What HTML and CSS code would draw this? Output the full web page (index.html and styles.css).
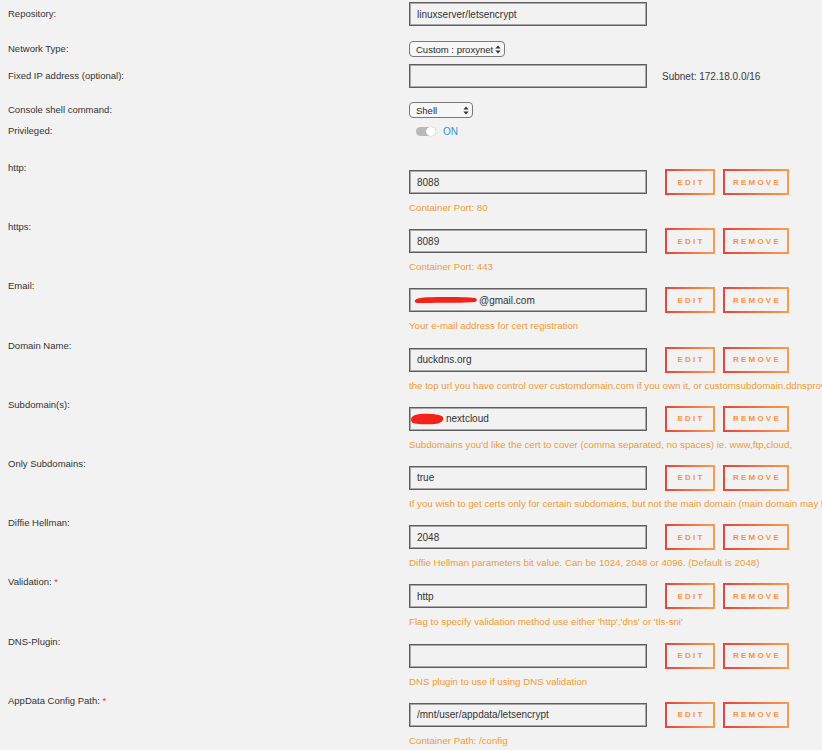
FILE: index.html
```html
<!DOCTYPE html>
<html lang="en">

<head>
    <meta charset="UTF-8">
    <meta name="viewport" content="width=device-width, initial-scale=1.0">
    <title>Update Container</title>
    <link rel="stylesheet" href="styles.css">
</head>

<body>
    <div class="settings">
        <div class="top-row row-repo">
            <label class="row-label">Repository:</label>
            <input class="text-input" type="text" value="linuxserver/letsencrypt">
        </div>
        <div class="top-row row-network">
            <label class="row-label">Network Type:</label>
            <div class="select select-network">
                <span>Custom : proxynet</span>
                <svg width="6" height="9" viewBox="0 0 6 9"><path d="M3 0.5 L5.6 3.6 H0.4 Z M3 8.5 L5.6 5.4 H0.4 Z" fill="#333"/></svg>
            </div>
        </div>
        <div class="top-row row-ip">
            <label class="row-label">Fixed IP address (optional):</label>
            <input class="text-input" type="text" value="">
            <span class="subnet">Subnet: 172.18.0.0/16</span>
        </div>
        <div class="top-row row-shell">
            <label class="row-label">Console shell command:</label>
            <div class="select select-shell">
                <span>Shell</span>
                <svg width="6" height="9" viewBox="0 0 6 9"><path d="M3 0.5 L5.6 3.6 H0.4 Z M3 8.5 L5.6 5.4 H0.4 Z" fill="#333"/></svg>
            </div>
        </div>
        <div class="top-row row-priv">
            <label class="row-label">Privileged:</label>
            <div class="switch-wrap">
                <span class="switch"><span class="knob"></span></span>
                <span class="switch-text">ON</span>
            </div>
        </div>

        <div class="config-list">
            <div class="row">
                <label class="row-label">http:</label>
                <div class="row-body">
                    <div class="row-line">
                        <input class="text-input" type="text" value="8088">
                        <button class="btn btn-edit">Edit</button>
                        <button class="btn btn-remove">Remove</button>
                    </div>
                    <div class="desc">Container Port: 80</div>
                </div>
            </div>
            <div class="row">
                <label class="row-label">https:</label>
                <div class="row-body">
                    <div class="row-line">
                        <input class="text-input" type="text" value="8089">
                        <button class="btn btn-edit">Edit</button>
                        <button class="btn btn-remove">Remove</button>
                    </div>
                    <div class="desc">Container Port: 443</div>
                </div>
            </div>
            <div class="row">
                <label class="row-label">Email:</label>
                <div class="row-body">
                    <div class="row-line">
                        <div class="field-wrap">
                            <input class="text-input redact-email" type="text" value="@gmail.com">
                            <svg class="scribble scribble-email" width="66" height="10" viewBox="0 0 66 10"><path d="M2 5.2 C4 2.6 14 2 30 2 C44 2 56 2.2 62 3 C64.5 3.6 64.5 6.2 62 7 C55 7.8 44 7.8 32 7.7 C20 7.6 9 8.2 4 7.9 C2 7.7 1.4 6.4 2 5.2 Z" fill="#f4221a"/></svg>
                        </div>
                        <button class="btn btn-edit">Edit</button>
                        <button class="btn btn-remove">Remove</button>
                    </div>
                    <div class="desc">Your e-mail address for cert registration</div>
                </div>
            </div>
            <div class="row">
                <label class="row-label">Domain Name:</label>
                <div class="row-body">
                    <div class="row-line">
                        <input class="text-input" type="text" value="duckdns.org">
                        <button class="btn btn-edit">Edit</button>
                        <button class="btn btn-remove">Remove</button>
                    </div>
                    <div class="desc">the top url you have control over customdomain.com if you own it, or customsubdomain.ddnsprovider.com if you don't own a domain</div>
                </div>
            </div>
            <div class="row">
                <label class="row-label">Subdomain(s):</label>
                <div class="row-body">
                    <div class="row-line">
                        <div class="field-wrap">
                            <input class="text-input redact-sub" type="text" value="nextcloud">
                            <svg class="scribble scribble-sub" width="36" height="14" viewBox="0 0 36 14"><path d="M2 7.5 C2 4 7 2 14 1.8 C22 1.6 31 2.4 33.5 4.6 C35.5 6.6 34 10.4 29 11.4 C21 12.6 11 12.6 5.5 11.6 C2.8 11 2 9.4 2 7.5 Z" fill="#f4221a"/></svg>
                        </div>
                        <button class="btn btn-edit">Edit</button>
                        <button class="btn btn-remove">Remove</button>
                    </div>
                    <div class="desc">Subdomains you'd like the cert to cover (comma separated, no spaces) ie. www,ftp,cloud,</div>
                </div>
            </div>
            <div class="row">
                <label class="row-label">Only Subdomains:</label>
                <div class="row-body">
                    <div class="row-line">
                        <input class="text-input" type="text" value="true">
                        <button class="btn btn-edit">Edit</button>
                        <button class="btn btn-remove">Remove</button>
                    </div>
                    <div class="desc">If you wish to get certs only for certain subdomains, but not the main domain (main domain may be hosted on another machine and cannot be validated), set this to true</div>
                </div>
            </div>
            <div class="row">
                <label class="row-label">Diffie Hellman:</label>
                <div class="row-body">
                    <div class="row-line">
                        <input class="text-input" type="text" value="2048">
                        <button class="btn btn-edit">Edit</button>
                        <button class="btn btn-remove">Remove</button>
                    </div>
                    <div class="desc">Diffie Hellman parameters bit value. Can be 1024, 2048 or 4096. (Default is 2048)</div>
                </div>
            </div>
            <div class="row">
                <label class="row-label">Validation: <span class="required">*</span></label>
                <div class="row-body">
                    <div class="row-line">
                        <input class="text-input" type="text" value="http">
                        <button class="btn btn-edit">Edit</button>
                        <button class="btn btn-remove">Remove</button>
                    </div>
                    <div class="desc">Flag to specify validation method use either 'http','dns' or 'tls-sni'</div>
                </div>
            </div>
            <div class="row">
                <label class="row-label">DNS-Plugin:</label>
                <div class="row-body">
                    <div class="row-line">
                        <input class="text-input" type="text" value="">
                        <button class="btn btn-edit">Edit</button>
                        <button class="btn btn-remove">Remove</button>
                    </div>
                    <div class="desc">DNS plugin to use if using DNS validation</div>
                </div>
            </div>
            <div class="row">
                <label class="row-label">AppData Config Path: <span class="required">*</span></label>
                <div class="row-body">
                    <div class="row-line">
                        <input class="text-input" type="text" value="/mnt/user/appdata/letsencrypt">
                        <button class="btn btn-edit">Edit</button>
                        <button class="btn btn-remove">Remove</button>
                    </div>
                    <div class="desc">Container Path: /config</div>
                </div>
            </div>
        </div>
    </div>
</body>

</html>
```

FILE: styles.css
```css
html,
body {
    overflow: hidden;
}

body {
    margin: 0;
    background-color: #f2f2f2;
    font-family: "Liberation Sans", Arial, sans-serif;
    color: #3a3a3a;
}

.settings {
    padding: 2px 0 0 8px;
}

.row-label {
    font-size: 9.5px;
    color: #333;
    line-height: 14px;
    white-space: nowrap;
}

.required {
    color: #e8333b;
}

/* top part: label + control side by side */
.top-row {
    display: grid;
    grid-template-columns: 401px auto 1fr;
    align-items: center;
}

.row-network {
    margin-top: 15px;
}

.row-ip {
    margin-top: 7px;
}

.row-shell {
    margin-top: 14px;
}

.row-priv {
    margin-top: 5px;
    height: 16px;
}

.text-input {
    display: block;
    box-sizing: border-box;
    width: 238px;
    height: 24px;
    margin: 0;
    padding: 0 7px;
    background-color: #f2f2f2;
    border: 1px solid #5e5e5e;
    box-shadow: inset 0 0 0 1px #a8a8a8;
    border-radius: 0;
    font-family: "Liberation Sans", Arial, sans-serif;
    font-size: 10px;
    color: #333;
    outline: none;
}

.subnet {
    margin-left: 15px;
    font-size: 10px;
    color: #3a3a3a;
}

.select {
    box-sizing: border-box;
    height: 16px;
    display: flex;
    align-items: center;
    justify-content: space-between;
    padding: 0 3px 0 6px;
    border: 1px solid #7a7a7a;
    border-radius: 4px;
    background-color: #f7f7f7;
    font-size: 9.5px;
    color: #2a2a2a;
    white-space: nowrap;
}

.select-network {
    width: 96px;
}

.select-shell {
    width: 64px;
}

.switch-wrap {
    display: flex;
    align-items: center;
    padding-left: 7px;
}

.switch {
    position: relative;
    width: 20px;
    height: 9px;
    border-radius: 5px;
    background-color: #b9b9b9;
}

.knob {
    position: absolute;
    right: 0;
    top: 0;
    width: 10px;
    height: 9px;
    border-radius: 5px;
    background-color: #fff;
    box-shadow: 0 0 1px rgba(0, 0, 0, 0.3);
}

.switch-text {
    margin-left: 7px;
    font-size: 10px;
    color: #2f92d8;
}

/* config entries */
.config-list {
    margin-top: 22px;
}

.row {
    display: grid;
    grid-template-columns: 401px 1fr;
    height: 59.2px;
}

.row-body {
    min-width: 0;
    overflow: hidden;
}

.row-line {
    display: flex;
    align-items: center;
    margin-top: 8px;
    height: 26px;
}

.field-wrap {
    position: relative;
}

.redact-email {
    padding-left: 69px;
}

.redact-sub {
    padding-left: 36px;
}

.scribble {
    position: absolute;
    pointer-events: none;
}

.scribble-email {
    left: 4px;
    top: 7px;
}

.scribble-sub {
    left: 0;
    top: 5px;
}

.btn {
    box-sizing: border-box;
    height: 26px;
    margin: 0;
    padding: 0;
    background-color: #f2f2f2;
    border: 2px solid;
    border-image: linear-gradient(90deg, #e8443c, #fd9a48) 1;
    font-family: "Liberation Sans", Arial, sans-serif;
    font-size: 8px;
    font-weight: bold;
    letter-spacing: 2.2px;
    text-transform: uppercase;
    color: #f8933e;
    cursor: pointer;
}

.btn-edit {
    width: 50px;
    margin-left: 18px;
    padding-left: 2px;
}

.btn-remove {
    width: 66px;
    margin-left: 8px;
    padding-left: 2px;
}

.desc {
    margin-top: 6px;
    font-size: 9.7px;
    line-height: 14px;
    color: #f09a33;
    white-space: nowrap;
}
```
